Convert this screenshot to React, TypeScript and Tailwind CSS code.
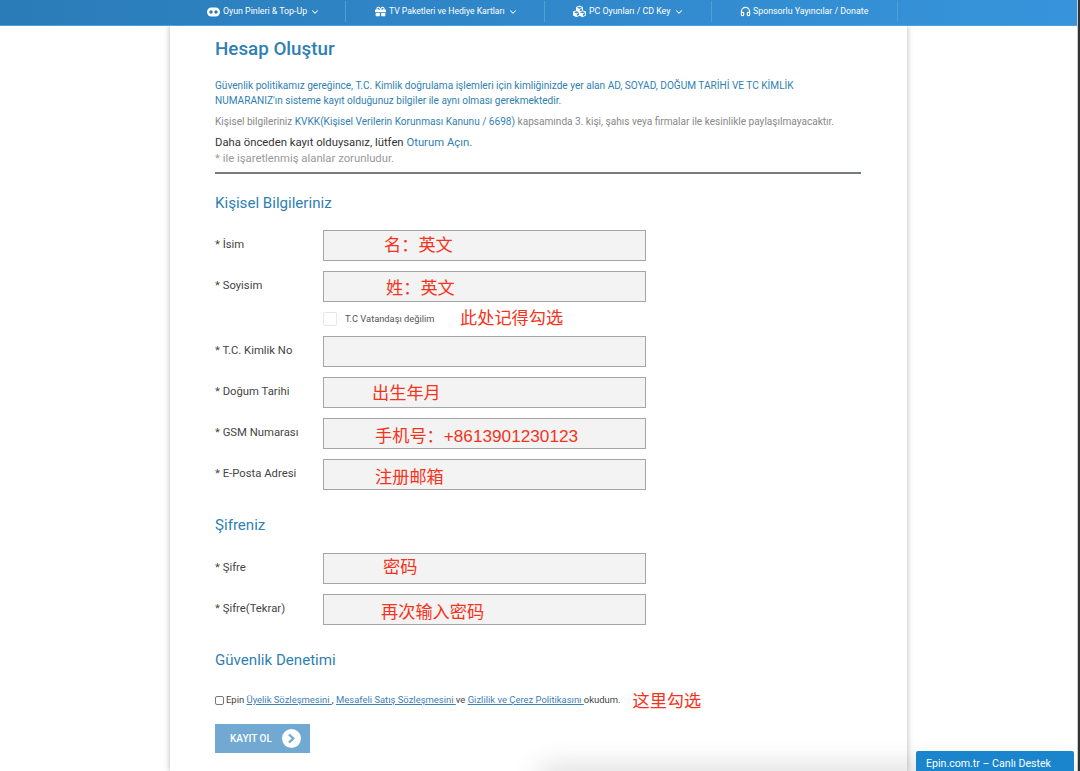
import { ChevronDown, Headphones } from 'lucide-react'
import { FaCubes, FaGift } from 'react-icons/fa'

type FieldProps = {
  label: string
  note?: string
  offset?: string
  noteTop?: string
}

const Field: React.FC<FieldProps> = ({ label, note, offset = 'pl-[60px]', noteTop = 'pt-[2px]' }) => {
  return (
    <div className="flex h-[31px] items-start">
      <div className="w-[108px] pt-[7px] text-[11.3px] leading-[16px] text-[#444]">* {label}</div>
      <div className={`h-[31px] w-[323px] border border-[#a3a6a8] bg-[#f3f3f3] ${offset}`}>
        {note && <span className={`cjk block whitespace-nowrap text-[17.2px] leading-[24px] text-[#f5331c] ${noteTop}`}>{note}</span>}
      </div>
    </div>
  )
}

const PillIcon = () => (
  <svg width="13" height="10" viewBox="0 0 13 10">
    <rect x="0" y="0.5" width="13" height="9" rx="4.5" fill="white" />
    <circle cx="4" cy="5" r="1.7" fill="#2a7cb8" />
    <circle cx="9" cy="5" r="1.7" fill="#2a7cb8" />
  </svg>
)

const navItems = [
  { label: 'Oyun Pinleri & Top-Up', icon: <PillIcon />, width: 'w-[139px]', pad: 'pl-0', gap: 'ml-[3px]', text: 'ml-[3px]', size: 'text-[8.8px]' },
  { label: 'TV Paketleri ve Hediye Kartları', icon: <FaGift size={11} />, width: 'w-[199px]', pad: 'pl-[29px]', gap: 'ml-[3px]', text: 'ml-[3px]', size: 'text-[8.65px]' },
  { label: 'PC Oyunları / CD Key', icon: <FaCubes size={13} />, width: 'w-[167px]', pad: 'pl-[28px]', gap: 'ml-[4px]', text: 'ml-[3px]', size: 'text-[8.8px]' },
  { label: 'Sponsorlu Yayıncılar / Donate', icon: <Headphones size={11} strokeWidth={2.5} />, width: 'w-[186px]', pad: 'pl-[28px]', gap: '', text: 'ml-[2px]', size: 'text-[8.8px]' },
]

export default function App() {
  return (
    <div className="relative flex h-[771px] w-[1080px] overflow-hidden bg-white font-['Roboto',sans-serif]">
      <style>{`.cjk{font-family:"Liberation Sans","Noto Sans CJK SC",sans-serif}`}</style>

      <div className="w-[1078px] shrink-0 border-r border-[#ccc]">
        <nav className="relative z-10 flex h-[26px] items-start border-b border-[#4aa0e0] bg-gradient-to-r from-[#2a7cb8] to-[#3794dc] pl-[207px] text-white">
          {navItems.map((item, i) => (
            <div key={item.label} className={`mt-[1px] flex h-[21px] items-center border-r border-[#4f9fd6] ${item.size} ${item.width} ${item.pad}`}>
              {item.icon}
              <span className={`whitespace-nowrap ${item.text}`}>{item.label}</span>
              {i < 3 && <ChevronDown size={10} strokeWidth={2.5} className={item.gap} />}
            </div>
          ))}
        </nav>

        <main className="ml-[170px] h-[745px] w-[737px] bg-white pl-[45px] pr-[46px] shadow-[0_0_6px_rgba(0,0,0,0.3)]">
          <h1 className="pt-[10px] text-[18.8px] font-medium leading-[26px] text-[#2f7fb3]">Hesap Oluştur</h1>
          <p className="mt-[16px] text-[10.08px] leading-[15px] text-[#2f7fb3]">
            Güvenlik politikamız gereğince, T.C. Kimlik doğrulama işlemleri için kimliğinizde yer alan AD, SOYAD, DOĞUM TARİHİ VE TC KİMLİK<br />NUMARANIZ'ın sisteme kayıt olduğunuz bilgiler ile aynı olması gerekmektedir.
          </p>
          <p className="mt-[6px] text-[10.08px] leading-[15px] text-[#888]">
            Kişisel bilgileriniz <span className="text-[#2f7fb3]">KVKK(Kişisel Verilerin Korunması Kanunu / 6698)</span> kapsamında 3. kişi, şahıs veya firmalar ile kesinlikle paylaşılmayacaktır.
          </p>
          <p className="mt-[6px] text-[11.3px] leading-[16px] text-[#333]">
            Daha önceden kayıt olduysanız, lütfen <span className="text-[#2f7fb3]">Oturum Açın.</span>
          </p>
          <p className="text-[11.3px] leading-[16px] text-[#999]">* ile işaretlenmiş alanlar zorunludur.</p>
          <hr className="mt-[5px] border-t-[2px] border-[#777b80]" />

          <h2 className="mt-[19px] text-[15.1px] leading-[20px] text-[#2f7fb3]">Kişisel Bilgileriniz</h2>

          <div className="mt-[17px] flex flex-col gap-[10px]">
            <Field label="İsim" note="名：英文" offset="pl-[60px]" noteTop="pt-[2px]" />
            <Field label="Soyisim" note="姓：英文" offset="pl-[62px]" noteTop="pt-[4px]" />
          </div>
          <div className="mt-[10px] flex h-[14px] items-center pl-[108px]">
            <span className="h-[14px] w-[14px] rounded-[2px] border border-[#e6e6e6] bg-white" />
            <span className="ml-[8px] w-[115px] whitespace-nowrap text-[9.3px] text-[#555]">T.C Vatandaşı değilim</span>
            <span className="cjk -mt-[1px] whitespace-nowrap text-[17.2px] text-[#f5331c]">此处记得勾选</span>
          </div>
          <div className="mt-[10px] flex flex-col gap-[10px]">
            <Field label="T.C. Kimlik No" />
            <Field label="Doğum Tarihi" note="出生年月" offset="pl-[48px]" noteTop="pt-[3px]" />
            <Field label="GSM Numarası" note="手机号：+8613901230123" offset="pl-[51px]" noteTop="pt-[5px]" />
            <Field label="E-Posta Adresi" note="注册邮箱" offset="pl-[51px]" noteTop="pt-[5px]" />
          </div>

          <h2 className="mt-[25px] text-[15.1px] leading-[20px] text-[#2f7fb3]">Şifreniz</h2>
          <div className="mt-[18px] flex flex-col gap-[10px]">
            <Field label="Şifre" note="密码" offset="pl-[59px]" noteTop="pt-[1px]" />
            <Field label="Şifre(Tekrar)" note="再次输入密码" offset="pl-[57px]" noteTop="pt-[5px]" />
          </div>

          <h2 className="mt-[25px] text-[15.1px] leading-[20px] text-[#2f7fb3]">Güvenlik Denetimi</h2>
          <div className="mt-[18px] flex h-[24px] items-center">
            <span className="h-[9px] w-[9px] rounded-[2px] border border-[#777] bg-white" />
            <span className="ml-[2px] whitespace-nowrap text-[9.45px] text-[#444]">
              Epin <span className="text-[#3a80b8] underline">Üyelik Sözleşmesini </span>, <span className="text-[#3a80b8] underline">Mesafeli Satış Sözleşmesini </span> ve <span className="text-[#3a80b8] underline">Gizlilik ve Çerez Politikasını </span>okudum.
            </span>
            <span className="cjk ml-[12px] mt-[3px] whitespace-nowrap text-[17.2px] text-[#f5331c]">这里勾选</span>
          </div>
          <button className="mt-[12px] flex h-[29px] w-[95px] items-center bg-[#71a9d3] pl-[15px] text-[10px] font-medium text-white">
            KAYIT OL
            <span className="ml-[10px] flex h-[19px] w-[19px] items-center justify-center rounded-full bg-white">
              <svg width="9" height="11" viewBox="0 0 9 11" fill="none">
                <path d="M2 1.5 6.2 5.5 2 9.5" stroke="#71a9d3" strokeWidth="2.4" />
              </svg>
            </span>
          </button>
        </main>
      </div>

      <div className="w-[2px] bg-[#333]" />

      <div className="absolute left-[540px] top-[771px] h-[10px] w-[538px] shadow-[0_0_28px_rgba(0,0,0,0.3)]" />

      <div className="absolute bottom-0 left-[916px] flex h-[20px] w-[158px] items-center rounded-t-[2px] bg-[#1a84cc] pl-[10px] pt-[5px] text-[10.6px] text-white">
        Epin.com.tr – Canlı Destek
      </div>
    </div>
  )
}
